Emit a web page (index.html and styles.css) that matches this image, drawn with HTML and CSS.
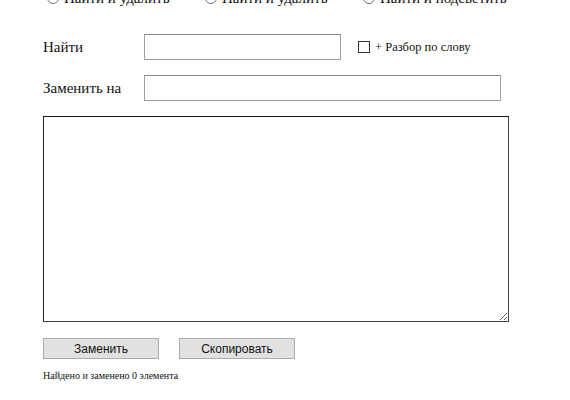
FILE: index.html
```html
<!DOCTYPE html>
<html lang="ru">
<head>
  <meta charset="UTF-8">
  <title>Найти и заменить</title>
  <link rel="stylesheet" href="styles.css">
</head>
<body>
  <div class="container">
    <div class="modes">
      <label class="mode"><input type="radio" name="mode"> Найти и удалить</label>
      <label class="mode"><input type="radio" name="mode"> Найти и удалить</label>
      <label class="mode"><input type="radio" name="mode"> Найти и подсветить</label>
    </div>

    <div class="row">
      <span class="label">Найти</span>
      <input type="text" class="field field-short">
      <label class="option"><input type="checkbox" class="check"> + Разбор по слову</label>
    </div>

    <div class="row">
      <span class="label">Заменить на</span>
      <input type="text" class="field field-long">
    </div>

    <textarea class="text"></textarea>

    <div class="buttons">
      <button class="btn">Заменить</button>
      <button class="btn">Скопировать</button>
    </div>

    <p class="status">Найдено и заменено 0 элемента</p>
  </div>
</body>
</html>
```

FILE: styles.css
```css
body {
  margin: 0;
  padding: 0;
  background: #fff;
  font-family: 'Liberation Serif', 'Times New Roman', serif;
  color: #111;
}

.container {
  padding: 0 0 0 43px;
}

.modes {
  display: flex;
  margin-top: -11px;
  height: 18px;
  font-size: 15px;
  line-height: 18px;
}

.mode {
  display: flex;
  align-items: center;
  width: 158px;
}

.mode input {
  margin: 0 5px 0 4px;
  width: 12px;
  height: 12px;
}

.row {
  display: flex;
  align-items: center;
  margin-top: 27px;
  height: 26px;
}

.row + .row {
  margin-top: 15px;
}

.label {
  width: 101px;
  font-size: 15px;
}

.field {
  box-sizing: border-box;
  height: 26px;
  border: 1px solid #a0a0a0;
  border-top-color: #8a8a8a;
  padding: 2px 4px;
  font-size: 14px;
}

.field-short {
  width: 197px;
}

.field-long {
  width: 357px;
}

.option {
  display: flex;
  align-items: center;
  margin-left: 16px;
  font-size: 12.5px;
}

.check {
  appearance: none;
  box-sizing: border-box;
  margin: 0 5px 0 1px;
  width: 12px;
  height: 12px;
  border: 1px solid #333;
  background: #fff;
}

.text {
  display: block;
  box-sizing: border-box;
  width: 466px;
  height: 206px;
  margin-top: 15px;
  border: 1px solid #444;
  border-top-color: #111;
  border-left-color: #222;
  padding: 2px;
}

.buttons {
  display: flex;
  gap: 20px;
  margin-top: 16px;
}

.btn {
  box-sizing: border-box;
  width: 116px;
  height: 21px;
  padding: 0;
  background: #e1e1e1;
  border: 1px solid #adadad;
  border-radius: 0;
  font-family: 'Liberation Sans', Arial, sans-serif;
  font-size: 12px;
  color: #111;
}

.status {
  margin: 11px 0 0;
  font-size: 10px;
}
```
